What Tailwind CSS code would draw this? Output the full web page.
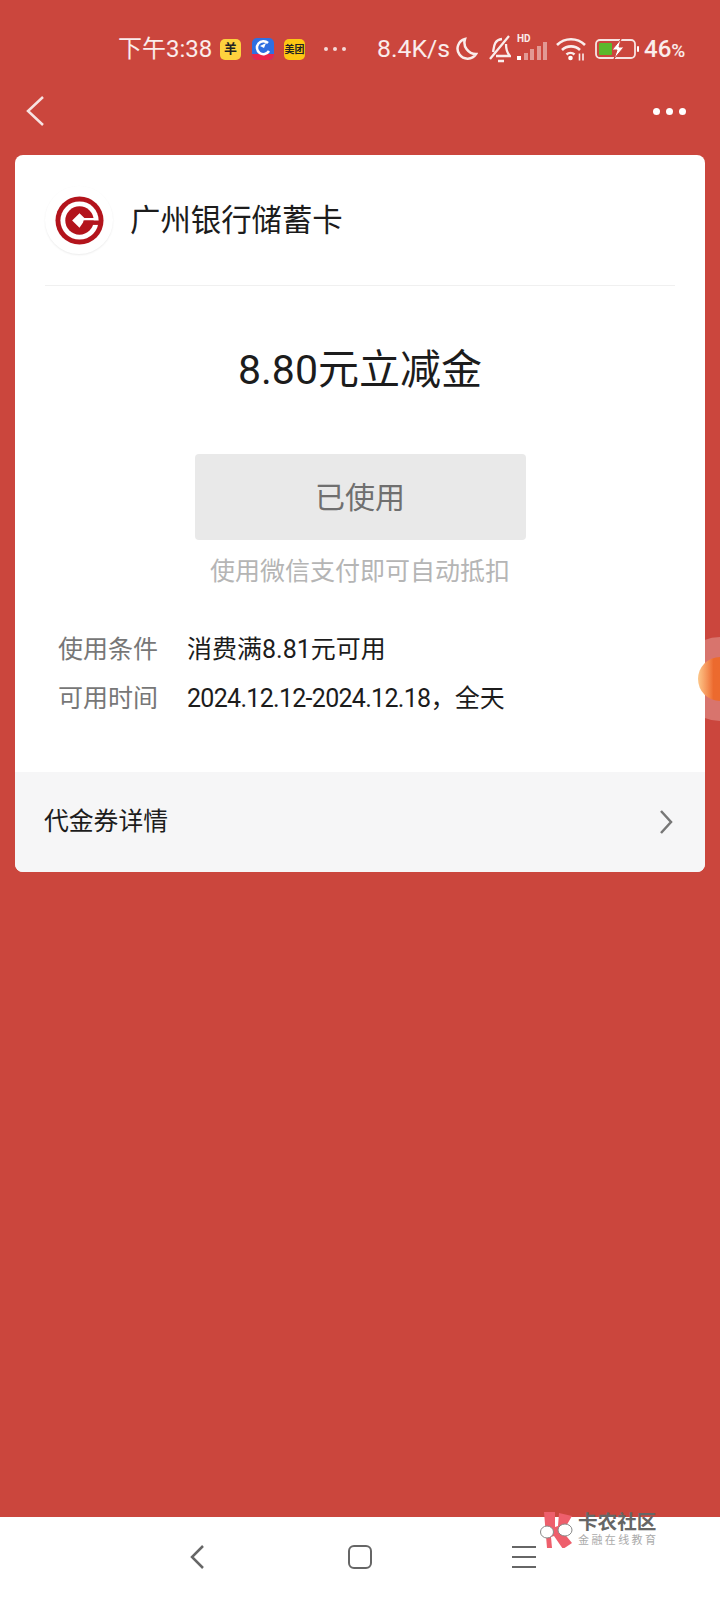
<!DOCTYPE html>
<html lang="en">
<head>
    <meta charset="UTF-8">
    <meta name="viewport" content="width=device-width, initial-scale=1.0">
    <title>广州银行储蓄卡</title>
    <script src="https://cdn.jsdelivr.net/npm/@tailwindcss/browser@4"></script>
</head>
<body class="relative w-[720px] h-[1600px] overflow-hidden bg-[#cb463d] font-['Roboto','Noto_Sans_CJK_SC',sans-serif]">

    <!-- status bar -->
    <div class="flex items-center h-[44px] mt-[27px] pl-[118px] text-white/90">
        <span class="text-[24px] leading-none w-[96px] whitespace-nowrap">下午3:38</span>
        <div class="ml-[6px] w-[21px] h-[21px] rounded-[5px] bg-[#fdd23e] flex items-center justify-center text-[13px] font-bold text-[#222]">羊</div>
        <svg class="ml-[11px] w-[22px] h-[22px]" viewBox="0 0 22 22">
            <rect width="22" height="22" rx="5" fill="#2f6fe0"/>
            <path d="M0 16h22v1a5 5 0 0 1-5 5H5a5 5 0 0 1-5-5z" fill="#e8274b"/>
            <path d="M16 5a6.500 6.500 0 1 0 1 8" fill="none" stroke="#fff" stroke-width="2.500"/>
            <path d="M8 8l6-3-2 5z" fill="#fff"/>
        </svg>
        <div class="ml-[10px] w-[21px] h-[21px] rounded-[5px] bg-[#fdc713] flex items-center justify-center text-[10px] font-bold text-[#222] whitespace-nowrap">美团</div>
        <div class="ml-[19px] flex gap-[5px]">
            <span class="w-[4px] h-[4px] rounded-full bg-white/80"></span>
            <span class="w-[4px] h-[4px] rounded-full bg-white/80"></span>
            <span class="w-[4px] h-[4px] rounded-full bg-white/80"></span>
        </div>
        <span class="ml-[31px] text-[24.800px] leading-none whitespace-nowrap">8.4K/s</span>
        <svg class="ml-[4px] w-[24px] h-[26px]" viewBox="0 0 24 26" fill="none" stroke="#fff" stroke-opacity=".9" stroke-width="2.500">
            <path d="M11 3a10 10 0 1 0 11 15A11.500 11.500 0 0 1 11 3z"/>
        </svg>
        <svg class="ml-[9px] w-[24px] h-[30px]" viewBox="0 0 24 30" fill="none" stroke="#fff" stroke-opacity=".9" stroke-width="2.300">
            <path d="M6 18c1-3 0-12 9-13M19 10c0 5 1 9 4 12H9M11 27h6M22 2L3 25"/>
        </svg>
        <div class="relative ml-[6px] w-[30px] h-[26px]">
            <span class="absolute left-[0px] top-[-2px] text-[10px] leading-none font-bold">HD</span>
            <div class="absolute left-[0px] bottom-[2px] flex items-end gap-[2.500px]">
                <span class="w-[4px] h-[4px] bg-white"></span>
                <span class="w-[4px] h-[7px] bg-white/45"></span>
                <span class="w-[4px] h-[11px] bg-white/45"></span>
                <span class="w-[4px] h-[14px] bg-white/45"></span>
                <span class="w-[4px] h-[18px] bg-white/45"></span>
            </div>
        </div>
        <svg class="ml-[9px] w-[30px] h-[24px]" viewBox="0 0 30 24" fill="none" stroke="#fff" stroke-opacity=".9" stroke-width="2.600">
            <path d="M1 8a20 20 0 0 1 28 0M6 13a13 13 0 0 1 18 0M10.500 17.500a6 6 0 0 1 8 0"/>
            <circle cx="14.500" cy="21" r="2.300" fill="#fff" stroke="none"/>
            <path d="M23.500 16.500v7M27 16.500v7" stroke-width="1.600"/>
        </svg>
        <svg class="ml-[9px] w-[44px] h-[22px]" viewBox="0 0 44 22">
            <rect x="1" y="2" width="39" height="18" rx="4" fill="none" stroke="#fff" stroke-opacity=".85" stroke-width="1.800"/>
            <rect x="4" y="5" width="13" height="12" rx="1" fill="#5cb82c"/>
            <path d="M26 1l-9 11h5l-3 9 10-12h-5z" fill="#fff" stroke="#cb463d"/>
            <rect x="42" y="8" width="2" height="6" rx="1" fill="#fff"/>
        </svg>
        <span class="ml-[5px] text-[24px] leading-none font-medium">46<span class="text-[19px]">%</span></span>
    </div>

    <!-- title bar -->
    <div class="flex items-center justify-between h-[56px] mt-[12px] pl-[26px] pr-[34px]">
        <svg class="w-[20px] h-[32px]" viewBox="0 0 20 32" fill="none" stroke="#fff" stroke-opacity=".85" stroke-width="2.500">
            <path d="M17 2L2 16l15 14"/>
        </svg>
        <div class="flex gap-[6px]">
            <span class="w-[7px] h-[7px] rounded-full bg-white"></span>
            <span class="w-[7px] h-[7px] rounded-full bg-white"></span>
            <span class="w-[7px] h-[7px] rounded-full bg-white"></span>
        </div>
    </div>

    <!-- voucher card -->
    <div class="mx-[15px] mt-[16px] w-[690px] h-[717px] rounded-[8px] bg-white overflow-hidden flex flex-col">
        <div class="mx-[30px] h-[131px] border-b border-[#f0f0f0] flex items-center gap-[17px]">
            <div class="w-[68px] h-[68px] rounded-full bg-white shadow-[0_1px_2px_rgba(0,0,0,0.08)] flex items-center justify-center">
                <svg class="w-[49px] h-[49px]" viewBox="0 0 50 50">
                    <circle cx="25" cy="25" r="24.500" fill="#b3141c"/>
                    <circle cx="25" cy="25" r="19.500" fill="#fff"/>
                    <circle cx="25" cy="25" r="14.500" fill="#b3141c"/>
                    <path d="M17.500 25l7.500-7.500 5 5h12V25H30l-5 7.500z" fill="#fff"/>
                    <rect x="29" y="25" width="16" height="4.500" fill="#b3141c"/>
                </svg>
            </div>
            <span class="pt-[3px] text-[30.400px] leading-none text-[#1c1c1c] whitespace-nowrap">广州银行储蓄卡</span>
        </div>

        <div class="mt-[57px] text-center text-[41px] leading-[54px] text-[#1c1c1c]">8.80元立减金</div>

        <div class="mx-auto mt-[57px] w-[331px] h-[86px] rounded-[4px] bg-[#e9e9e9] flex items-center justify-center text-[30px] text-[#6f6f6f]">已使用</div>
        <p class="mt-[16px] text-center text-[25px] leading-[32px] text-[#b5b5b5]">使用微信支付即可自动抵扣</p>

        <div class="mt-[45px] pl-[43px] flex flex-col gap-[15px] text-[25px] leading-[34px]">
            <div class="flex">
                <span class="w-[129px] text-[#777]">使用条件</span>
                <span class="text-[#1c1c1c]">消费满8.81元可用</span>
            </div>
            <div class="flex">
                <span class="w-[129px] text-[#777]">可用时间</span>
                <span class="text-[#1c1c1c]"><span class="tracking-[-0.700px]">2024.12.12-2024.12.18，</span>全天</span>
            </div>
        </div>

        <div class="mt-auto h-[100px] bg-[#f6f6f7] pl-[29px] pr-[32px] flex items-center justify-between">
            <span class="text-[24.800px] text-[#1c1c1c]">代金券详情</span>
            <svg class="w-[14px] h-[24px]" viewBox="0 0 14 24" fill="none" stroke="#777" stroke-width="2.500">
                <path d="M2 1l10 11L2 23"/>
            </svg>
        </div>
    </div>

    <!-- floating bubble at the edge -->
    <div class="absolute left-[678px] top-[637px] w-[42px] h-[84px] overflow-hidden">
        <div class="w-[84px] h-[84px] rounded-full bg-white/25 flex items-center justify-center">
            <div class="w-[44px] h-[44px] rounded-full bg-linear-to-r from-[#fcc78a] from-0% to-[#ec6a2e] to-35%"></div>
        </div>
    </div>

    <!-- navigation bar -->
    <div class="absolute left-0 right-0 bottom-0 h-[83px] bg-white flex items-center pl-[189px] pb-[3px]">
        <svg class="w-[16px] h-[24px]" viewBox="0 0 16 24" fill="none" stroke="#666" stroke-width="2.500">
            <path d="M14 1L3 12l11 11"/>
        </svg>
        <div class="ml-[143px] w-[24px] h-[24px] rounded-[6px] border-[2.500px] border-[#666]"></div>
        <div class="ml-[140px] w-[24px] flex flex-col gap-[8px]">
            <span class="h-[2px] bg-[#666]"></span>
            <span class="h-[2px] bg-[#666]"></span>
            <span class="h-[2px] bg-[#666]"></span>
        </div>
    </div>

    <!-- watermark -->
    <div class="absolute left-[540px] top-[1512px] flex items-center gap-[2px]">
        <svg class="w-[36px] h-[36px]" viewBox="0 0 36 36">
            <path d="M4 0h11v15l3-1 1-13 13 3-7 12-2 4 9 11-9 6-9-13-3 1 1 11H7z" fill="#ee5f6c"/>
            <ellipse cx="7" cy="20" rx="6.500" ry="6" fill="#fff" stroke="#888"/>
            <ellipse cx="25" cy="18" rx="7" ry="6" fill="#fff" stroke="#888"/>
        </svg>
        <div class="flex flex-col">
            <span class="text-[19.600px] leading-[22px] font-bold text-[#666] whitespace-nowrap">卡农社区</span>
            <span class="text-[11px] leading-[14px] tracking-[2.400px] text-[#aaa] whitespace-nowrap">金融在线教育</span>
        </div>
    </div>
</body>
</html>
